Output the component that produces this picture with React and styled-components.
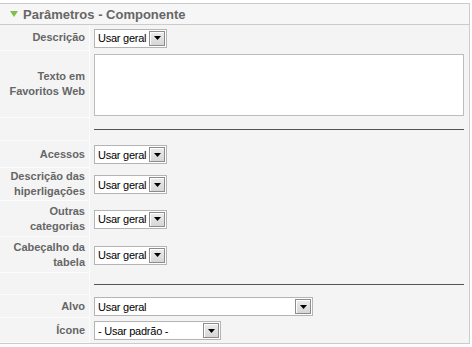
import React from 'react';
import styled, { createGlobalStyle } from 'styled-components';

const Global = createGlobalStyle`
  html, body { margin: 0; padding: 0; background: #fff; }
  body { font-family: "Liberation Sans", Arial, sans-serif; }
`;

const Panel = styled.section`
  margin-top: 3px;
  width: 469px;
  border: 1px solid #cbcbcb;
  border-left: none;
  background: #f4f4f4;
`;

const Header = styled.h3`
  margin: 0;
  height: 20px;
  display: flex;
  align-items: center;
  gap: 5px;
  padding-left: 10px;
  border-bottom: 1px solid #cbcbcb;
  background: #f6f6f6;
  font: bold 13px "Liberation Sans", Arial, sans-serif;
  color: #666;
`;

const Row = styled.div`
  display: grid;
  grid-template-columns: 90px 1fr;
  height: ${(p) => p.$h}px;
`;

const Key = styled.div`
  box-sizing: border-box;
  border-right: 1px solid #fcfcfc;
  border-bottom: 1px solid #fcfcfc;
  display: flex;
  align-items: center;
  justify-content: flex-end;
  text-align: right;
  padding-right: 4px;
  font: bold 11px/15px "Liberation Sans", Arial, sans-serif;
  color: #666;
`;

const Value = styled.div`
  display: flex;
  align-items: center;
  padding: 0 5px 0 4px;
  padding-top: ${(p) => p.$pt || 0}px;
`;

const SelectBox = styled.span`
  display: inline-flex;
  align-items: center;
  box-sizing: border-box;
  width: ${(p) => p.$w}px;
  height: 19px;
  border: 1px solid #b4b4b4;
  background: #fff;
`;

const NativeSelect = styled.select`
  appearance: none;
  -webkit-appearance: none;
  flex: 1;
  min-width: 0;
  height: 100%;
  border: none;
  outline: none;
  background: transparent;
  padding: 0 0 0 3px;
  margin: 0;
  font: 11px "Liberation Sans", Arial, sans-serif;
  letter-spacing: -0.25px;
  color: #000;
`;

const DropButton = styled.span`
  box-sizing: border-box;
  width: 16px;
  height: 15px;
  margin-right: 1px;
  display: flex;
  align-items: center;
  justify-content: center;
  border: 1px solid #8c8c8c;
  box-shadow: inset 1px 1px 0 #fff;
  background: linear-gradient(#ececec, #d6d6d6);
`;

const TextArea = styled.textarea`
  box-sizing: border-box;
  width: 100%;
  height: 62px;
  border: 1px solid #bdbdbd;
  background: #fff;
  resize: none;
  margin: 0;
`;

const Rule = styled.div`
  width: 100%;
  height: 1px;
  background: #555;
`;

function Arrow() {
  return (
    <svg width="8" height="6" viewBox="0 0 8 6">
      <polygon points="0,0 8,0 4,6" fill="#7fc04a" />
    </svg>
  );
}

function Select({ w, value }) {
  return (
    <SelectBox $w={w}>
      <NativeSelect defaultValue={value}>
        <option>{value}</option>
      </NativeSelect>
      <DropButton>
        <svg width="7" height="4" viewBox="0 0 7 4">
          <polygon points="0,0 7,0 3.5,4" fill="#000" />
        </svg>
      </DropButton>
    </SelectBox>
  );
}

export default function App() {
  return (
    <>
      <Global />
      <Panel>
        <Header>
          <Arrow />
          Parâmetros - Componente
        </Header>
        <Row $h={26}>
          <Key>Descrição</Key>
          <Value><Select w={73} value="Usar geral" /></Value>
        </Row>
        <Row $h={67}>
          <Key>Texto em<br />Favoritos Web</Key>
          <Value $pt={1}><TextArea /></Value>
        </Row>
        <Row $h={23}>
          <Key />
          <Value><Rule /></Value>
        </Row>
        <Row $h={27}>
          <Key>Acessos</Key>
          <Value><Select w={73} value="Usar geral" /></Value>
        </Row>
        <Row $h={33}>
          <Key>Descrição das<br />hiperligações</Key>
          <Value><Select w={73} value="Usar geral" /></Value>
        </Row>
        <Row $h={36}>
          <Key>Outras<br />categorias</Key>
          <Value><Select w={73} value="Usar geral" /></Value>
        </Row>
        <Row $h={36}>
          <Key>Cabeçalho da<br />tabela</Key>
          <Value><Select w={73} value="Usar geral" /></Value>
        </Row>
        <Row $h={22}>
          <Key />
          <Value><Rule /></Value>
        </Row>
        <Row $h={23}>
          <Key>Alvo</Key>
          <Value><Select w={219} value="Usar geral" /></Value>
        </Row>
        <Row $h={25}>
          <Key>Ícone</Key>
          <Value><Select w={127} value="- Usar padrão -" /></Value>
        </Row>
      </Panel>
    </>
  );
}
